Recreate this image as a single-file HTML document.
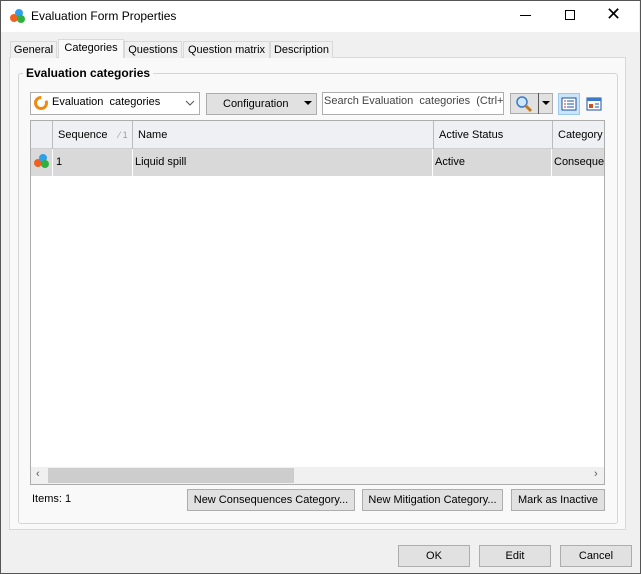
<!DOCTYPE html>
<html><head><style>
*{box-sizing:border-box;margin:0;padding:0}
body{width:641px;height:574px;overflow:hidden;font-family:"Liberation Sans",sans-serif;font-size:11px;color:#000;background:#f0f0f0;position:relative}
.a{position:absolute}
.btn{position:absolute;background:#e1e1e1;border:1px solid #adadad;text-align:center;line-height:20px;font-size:11px}
.tab{position:absolute;top:41px;height:17px;border:1px solid #d9d9d9;border-bottom:none;background:#f0f0f0;line-height:16px;text-align:center;font-size:11px}
.hd{position:absolute;top:0;height:28px;line-height:28px;border-right:1px solid #bbb;padding-left:5px}
.cl{position:absolute;top:28px;height:27px;line-height:27px;padding-left:3px;border-right:1px solid #fff}
</style></head><body>
<div class="a" style="left:0;top:0;width:641px;height:574px;border:1px solid #555"></div>
<div class="a" style="left:1px;top:1px;width:638px;height:31px;background:#fff"></div>
<svg class="a" style="left:9px;top:8px" width="18" height="16"><circle cx="5" cy="10" r="4" fill="#f06020"/><circle cx="10" cy="5" r="4" fill="#2ea0e8"/><circle cx="12" cy="11" r="4" fill="#30b040"/></svg>
<div class="a" style="left:31px;top:9px;font-size:12px">Evaluation Form Properties</div>
<div class="a" style="left:520px;top:15px;width:11px;height:1px;background:#000"></div>
<div class="a" style="left:565px;top:10px;width:10px;height:10px;border:1px solid #000"></div>
<div class="a" style="left:606px;top:4px;font-size:18px;font-weight:300">✕</div>
<div class="a" style="left:9px;top:57px;width:617px;height:473px;background:#f9f9f9;border:1px solid #d9d9d9"></div>
<div class="tab" style="left:10px;width:47px">General</div>
<div class="tab" style="left:58px;top:39px;height:19px;width:66px;background:#f9f9f9;border-color:#d9d9d9">Categories</div>
<div class="tab" style="left:124px;width:58px">Questions</div>
<div class="tab" style="left:183px;width:87px">Question matrix</div>
<div class="tab" style="left:270px;width:63px">Description</div>
<div class="a" style="left:18px;top:73px;width:600px;height:451px;border:1px solid #d5d5d5;border-radius:3px"></div>
<div class="a" style="left:23px;top:66px;padding:0 3px;background:#f9f9f9;font-weight:bold;font-size:12px">Evaluation categories</div>
<div class="a" style="left:30px;top:92px;width:170px;height:23px;background:#fff;border:1px solid #adadad"></div>
<svg class="a" style="left:33px;top:95px" width="16" height="16"><circle cx="8" cy="8" r="5.5" fill="none" stroke="#f08a10" stroke-width="3" stroke-dasharray="26 6"/></svg>
<div class="a" style="left:52px;top:96px">Evaluation&nbsp; categories</div>
<svg class="a" style="left:185px;top:100px" width="10" height="6"><path d="M1 1L5 5L9 1" fill="none" stroke="#555"/></svg>
<div class="btn" style="left:206px;top:93px;width:111px;height:22px;text-align:left;padding-left:16px">Configuration</div>
<svg class="a" style="left:304px;top:101px" width="8" height="5"><path d="M0 0H8L4 4Z"/></svg>
<div class="a" style="left:322px;top:92px;width:182px;height:23px;background:#fff;border:1px solid #adadad;padding:2px 0 0 1px;white-space:nowrap;overflow:hidden;color:#444">Search Evaluation&nbsp; categories&nbsp; (Ctrl+H</div>
<div class="a" style="left:510px;top:93px;width:43px;height:21px;background:#e1e1e1;border:1px solid #adadad"></div>
<div class="a" style="left:538px;top:93px;width:1px;height:21px;background:#555"></div>
<svg class="a" style="left:515px;top:95px" width="18" height="18"><circle cx="7" cy="7" r="5" fill="#cde6fb" stroke="#3a7ac8" stroke-width="1.5"/><path d="M10.5 10.5L16 16" stroke="#c07a20" stroke-width="3"/></svg>
<svg class="a" style="left:542px;top:101px" width="8" height="5"><path d="M0 0H8L4 4Z"/></svg>
<div class="a" style="left:558px;top:93px;width:22px;height:22px;background:#cce4f7;border:1px solid #99c9ef"></div>
<svg class="a" style="left:561px;top:96px" width="16" height="16"><rect x="1" y="2" width="14" height="12" fill="#fff" stroke="#1a4fa0"/><path d="M3 5h2M3 8h2M3 11h2" stroke="#d03020"/><path d="M6 5h7M6 8h7M6 11h7" stroke="#1a4fa0"/></svg>
<svg class="a" style="left:586px;top:96px" width="16" height="16"><rect x="1" y="2" width="14" height="12" fill="#fff" stroke="#1a4fa0"/><rect x="1" y="2" width="14" height="3" fill="#3a7ac8"/><rect x="3" y="8" width="4" height="4" fill="#d05020"/><path d="M9 8h4M9 11h4" stroke="#1a4fa0"/></svg>
<div class="a" style="left:30px;top:120px;width:575px;height:365px;background:#fff;border:1px solid #adadad;overflow:hidden">
 <div class="a" style="left:0;top:0;width:575px;height:28px;background:#eef0f3;border-bottom:1px solid #d0d0d0"></div>
 <div class="hd" style="left:0;width:22px"></div>
 <div class="hd" style="left:22px;width:80px;padding-left:5px">Sequence <span style="color:#999;font-size:9px;margin-left:8px">⁄ 1</span></div>
 <div class="hd" style="left:102px;width:301px">Name</div>
 <div class="hd" style="left:403px;width:119px">Active Status</div>
 <div class="hd" style="left:522px;width:80px">Category</div>
 <div class="a" style="left:0;top:28px;width:575px;height:27px;background:#d9d9d9"></div>
 <svg class="a" style="left:2px;top:32px" width="18" height="16"><circle cx="5" cy="10" r="4" fill="#f06020"/><circle cx="10" cy="5" r="4" fill="#2ea0e8"/><circle cx="12" cy="11" r="4" fill="#30b040"/></svg>
 <div class="cl" style="left:21px;width:81px;border-left:1px solid #fff">1</div>
 <div class="cl" style="left:101px;width:301px">Liquid spill</div>
 <div class="cl" style="left:401px;width:120px">Active</div>
 <div class="cl" style="left:520px;width:60px;white-space:nowrap;overflow:hidden">Consequen</div>
 <div class="a" style="left:0;top:346px;width:575px;height:17px;background:#f0f0f0"></div>
 <div class="a" style="left:17px;top:347px;width:246px;height:15px;background:#cdcdcd"></div>
 <div class="a" style="left:5px;top:347px;font-size:11px;color:#555">‹</div>
 <div class="a" style="left:563px;top:347px;font-size:11px;color:#555">›</div>
</div>
<div class="a" style="left:32px;top:493px">Items: 1</div>
<div class="btn" style="left:187px;top:489px;width:168px;height:22px">New Consequences Category...</div>
<div class="btn" style="left:362px;top:489px;width:141px;height:22px">New Mitigation Category...</div>
<div class="btn" style="left:511px;top:489px;width:94px;height:22px">Mark as Inactive</div>
<div class="btn" style="left:398px;top:545px;width:72px;height:22px">OK</div>
<div class="btn" style="left:479px;top:545px;width:72px;height:22px">Edit</div>
<div class="btn" style="left:560px;top:545px;width:72px;height:22px">Cancel</div>
</body></html>
